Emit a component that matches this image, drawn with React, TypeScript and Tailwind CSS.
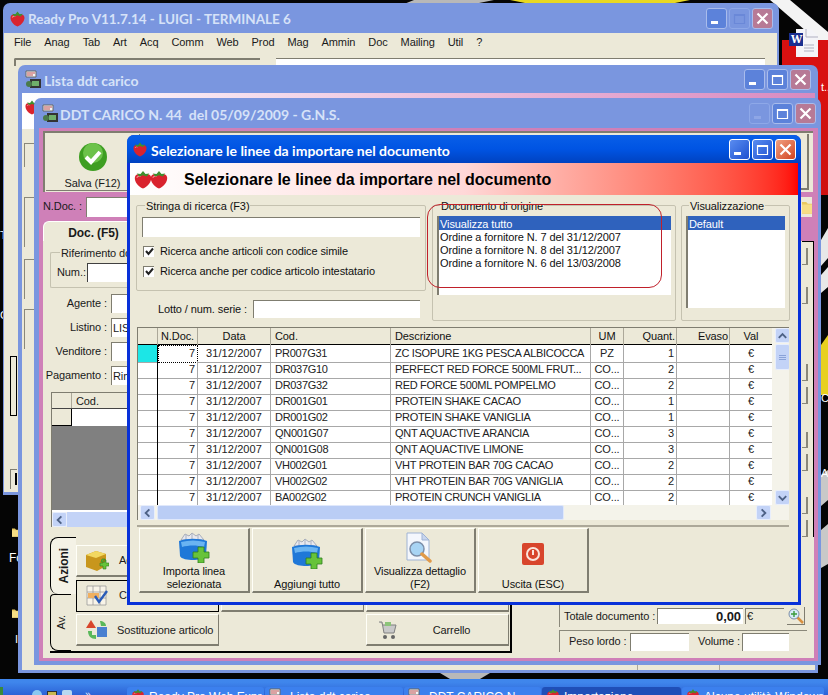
import React from "react";

const rows = [
  ["PR007G31", "ZC ISOPURE 1KG PESCA ALBICOCCA", "PZ", "1"],
  ["DR037G10", "PERFECT RED FORCE 500ML FRUT...", "CO...", "2"],
  ["DR037G32", "RED FORCE 500ML POMPELMO", "CO...", "2"],
  ["DR001G01", "PROTEIN SHAKE CACAO", "CO...", "1"],
  ["DR001G02", "PROTEIN SHAKE VANIGLIA", "CO...", "1"],
  ["QN001G07", "QNT AQUACTIVE ARANCIA", "CO...", "3"],
  ["QN001G08", "QNT AQUACTIVE LIMONE", "CO...", "3"],
  ["VH002G01", "VHT PROTEIN BAR 70G CACAO", "CO...", "2"],
  ["VH002G02", "VHT PROTEIN BAR 70G VANIGLIA", "CO...", "2"],
  ["BA002G02", "PROTEIN CRUNCH VANIGLIA", "CO...", "2"],
];

const menu = ["File", "Anag", "Tab", "Art", "Acq", "Comm", "Web", "Prod", "Mag", "Ammin", "Doc", "Mailing", "Util", "?"];

const Strawberry = ({ size = 16 }: { size?: number }) => (
  <svg width={size} height={size} viewBox="0 0 16 16" className="shrink-0">
    <path d="M8 15.5C4 14 1 10 1.5 6.5 2 4 5 3.5 8 4.5c3-1 6-.5 6.5 2C15 10 12 14 8 15.5z" fill="#d9232e" />
    <path d="M3 7c1-1.5 2-1.5 3-1" stroke="#f58a8a" strokeWidth="1" fill="none" />
    <path d="M3 3.5 6 4 8 1.5 10 4l3-.5L11 6 8 5 5 6z" fill="#3f8f2f" />
  </svg>
);

const WinBtn = ({ kind, state }: { kind: "min" | "max" | "close"; state: "active" | "inactive" | "disabled" }) => {
  const bg =
    kind === "close"
      ? state === "active"
        ? "bg-gradient-to-br from-[#f0a080] to-[#d0401c] border-white"
        : "bg-[#b77a96] border-[#a9bcec]"
      : state === "active"
        ? "bg-gradient-to-br from-[#5a8cf0] to-[#1f50d0] border-white"
        : state === "disabled"
          ? "bg-[#7a96df] border-[#8ea8e8]"
          : "bg-[#5c82da] border-[#a9bcec]";
  const stroke = state === "disabled" ? "#8ea6e6" : "#ffffff";
  return (
    <div className={`w-[21px] h-[21px] rounded-[3px] border flex items-center justify-center ${bg}`}>
      <svg width="15" height="15" viewBox="0 0 15 15">
        {kind === "min" && <rect x="2" y="10" width="7" height="3" fill={stroke} />}
        {kind === "max" && (
          <path d="M2.5 3.5h10v9h-10zM2.5 4.5h10" stroke={stroke === "#ffffff" ? "#ffffff" : "#6a88d8"} strokeWidth="1.2" fill="none" />
        )}
        {kind === "close" && <path d="M2.5 2.5l10 10M12.5 2.5l-10 10" stroke="#ffffff" strokeWidth="2.2" />}
      </svg>
    </div>
  );
};

const DocIcon = () => (
  <svg width="17" height="19" viewBox="0 0 17 19" className="shrink-0">
    <path d="M1 1h10v6H1z" fill="#f4f4f4" stroke="#666" />
    <path d="M2 3h8M2 5h6" stroke="#c05050" />
    <rect x="5" y="9" width="11" height="9" fill="#333" />
    <rect x="7" y="11" width="7" height="5" fill="#6fae6a" />
    <circle cx="4" cy="14" r="3" fill="#4a7a4a" />
  </svg>
);

const Basket = () => (
  <svg width="32" height="31" viewBox="0 0 32 31">
    <path d="M3 8l4-6 4 2 3-3 4 3 3-2 5 6z" fill="#e8e8ee" stroke="#8a93a8" strokeWidth="0.7" />
    <path d="M8 3v5M14 2v6M20 3v5" stroke="#a8b0c0" />
    <path d="M1 9c8-3 20-3 28 0l-1 15c-1 3-8 4-13 4S3 27 2 24z" fill="#1f78d8" />
    <path d="M3 10c8-2 16-2 24 0l-1 5c-7-2-15-2-22 0z" fill="#6ab4f2" />
    <path d="M20 15h6v5h5v6h-5v5h-6v-5h-5v-6h5z" fill="#67c33a" stroke="#2f7d20" strokeWidth="0.8" />
  </svg>
);

const DetailIcon = () => (
  <svg width="30" height="31" viewBox="0 0 30 31">
    <path d="M2 1h15l7 7v20H2z" fill="#f4f7fd" stroke="#9fb3d4" />
    <path d="M17 1v7h7z" fill="#c8d6ee" stroke="#9fb3d4" />
    <circle cx="12" cy="17" r="7" fill="#a8d4f4" stroke="#7c8ea8" strokeWidth="1.5" />
    <path d="M17 22l8 7" stroke="#e09a4a" strokeWidth="3.5" strokeLinecap="round" />
  </svg>
);

const PowerIcon = () => (
  <svg width="22" height="22" viewBox="0 0 22 22">
    <rect width="22" height="22" rx="2" fill="#d8452c" />
    <circle cx="11" cy="11" r="6" fill="none" stroke="#fbe4dc" strokeWidth="2" />
    <path d="M11 7v5" stroke="#fbe4dc" strokeWidth="2" />
  </svg>
);

const CheckCircle = () => (
  <svg width="28" height="28" viewBox="0 0 28 28">
    <circle cx="14" cy="14" r="14" fill="#3e9e22" />
    <circle cx="14" cy="10" r="10" fill="#6cc24a" />
    <path d="M7 14l5 5 9-10" stroke="#ffffff" strokeWidth="4" fill="none" />
  </svg>
);

const Folder = ({ w = 12, h = 16 }: { w?: number; h?: number }) => (
  <svg width={w} height={h} viewBox="0 0 12 16">
    <path d="M0 2h5l2 2h5v12H0z" fill="#e8c860" />
    <path d="M0 5h12v11H0z" fill="#f6dd85" />
  </svg>
);

const CubeIcon = () => (
  <svg width="24" height="23" viewBox="0 0 24 23">
    <path d="M1 6l10-4 10 3v12l-9 5-11-4z" fill="#c8961c" />
    <path d="M1 6l10-4 10 3-10 4z" fill="#f2d860" />
    <path d="M16 13h4v-3h-3zM15 14h3v-3h3v3h3v3h-3v3h-3v-3h-3z" fill="#67c33a" stroke="#2f7d20" strokeWidth="0.6" />
  </svg>
);

const GridIcon = () => (
  <svg width="22" height="21" viewBox="0 0 22 21">
    <path d="M1 1h19v19H1zM1 7h19M1 13h19M7 1v19M14 1v19" fill="#f8f4e8" stroke="#999" strokeWidth="0.8" />
    <rect x="2" y="8" width="11" height="5" fill="#f0b060" />
    <path d="M9 11l4 6 8-11" stroke="#2a5cb8" strokeWidth="2.4" fill="none" />
  </svg>
);

const ShapesIcon = () => (
  <svg width="23" height="22" viewBox="0 0 23 22">
    <path d="M5 1l5 8H0z" fill="#d8452c" />
    <path d="M11 8h10v10H11z" fill="#4a80d0" />
    <path d="M14 2c3 0 6 2 6 5h-5z" fill="#5ab85a" />
    <path d="M2 12c0 5 3 8 8 8v-4H6v-4z" fill="#5ab85a" />
  </svg>
);

const CartIcon = () => (
  <svg width="20" height="22" viewBox="0 0 20 22">
    <path d="M2 3h3l2 11h10l2-8H6" fill="#c9c9c9" stroke="#808080" />
    <path d="M8 3h6v4H8z" fill="#8cc47a" />
    <circle cx="8" cy="18" r="2" fill="#666" />
    <circle cx="16" cy="18" r="2" fill="#666" />
  </svg>
);

const Sunken = ({ className = "", children }: { className?: string; children?: React.ReactNode }) => (
  <div className={`bg-white border-t border-l border-[#7f7d70] leading-none flex items-center whitespace-nowrap overflow-hidden ${className}`}>{children}</div>
);

const ArrowBtn = ({ dir }: { dir: "up" | "down" | "left" | "right" }) => {
  const d = { up: "M3 9l4-4 4 4", down: "M3 5l4 4 4-4", left: "M9 3L5 7l4 4", right: "M5 3l4 4-4 4" }[dir];
  return (
    <div className="w-[15px] h-[15px] shrink-0 rounded-[2px] bg-[#c3d3f7] border border-[#e8eefc] flex items-center justify-center">
      <svg width="14" height="14" viewBox="0 0 14 14">
        <path d={d} stroke="#4d6185" strokeWidth="2" fill="none" />
      </svg>
    </div>
  );
};

const ActionBtn = ({ icon, lines }: { icon: React.ReactNode; lines: string[] }) => (
  <div className="w-[111px] h-[65px] flex flex-col items-center bg-[#ece9d8] border border-t-[#fffff8] border-l-[#fffff8] border-r-[#7f7d70] border-b-[#7f7d70] border-b-2 border-r-2">
    <div className="flex-1 flex items-center justify-center">{icon}</div>
    <div className="text-center leading-[13px]">
      {lines.map((l) => (
        <div key={l}>{l}</div>
      ))}
    </div>
  </div>
);

const ToolBtn = ({ icon, label, selected, labelClass = "" }: { icon?: React.ReactNode; label?: string; selected?: boolean; labelClass?: string }) => (
  <div className={`h-[32px] flex items-center bg-[#ece9d8] overflow-hidden ${selected ? "border border-black" : "border border-t-[#fffff8] border-l-[#fffff8] border-r-[#7f7d70] border-b-[#7f7d70] border-b-2"}`}>
    <div className="w-[40px] flex justify-center shrink-0">{icon}</div>
    <span className={`flex-1 text-center whitespace-nowrap ${labelClass}`}>{label}</span>
  </div>
);

const Legend = ({ children }: { children: React.ReactNode }) => (
  <legend className="ml-[3px] px-[1px] leading-[16px] h-[14px]">{children}</legend>
);

const Check = () => (
  <div className="w-[11px] h-[11px] bg-white border-t border-l border-[#7f7d70] flex items-center justify-center shrink-0">
    <svg width="9" height="9" viewBox="0 0 9 9">
      <path d="M1 4l2.5 3L8 1.5" stroke="#222" strokeWidth="2" fill="none" />
    </svg>
  </div>
);

const Stub = ({ mt }: { mt: string }) => (
  <div className={`h-[18px] w-[6px] border-r-2 border-b border-[#8a887a] ${mt}`} />
);

function ReadyProWindow() {
  return (
    <div className="absolute left-[3px] top-[3px] w-[776px] h-[492px] flex flex-col rounded-t-[7px] bg-[#7a96df] text-[#1a1a1a]">
      <div className="h-[30px] flex items-center pl-[6px] pr-[6px] shrink-0">
        <Strawberry size={17} />
        <span className="ml-[2px] mt-[2px] font-['Lato',sans-serif] font-bold text-[13.5px] tracking-normal text-[#d6e2f8] whitespace-nowrap">Ready Pro V11.7.14 - LUIGI - TERMINALE 6</span>
        <div className="ml-auto flex gap-[2px]">
          <WinBtn kind="min" state="inactive" />
          <WinBtn kind="max" state="disabled" />
          <WinBtn kind="close" state="inactive" />
        </div>
      </div>
      <div className="flex-1 ml-[1px] mr-[2px] bg-[#ece9d8] flex flex-col">
        <div className="h-[19px] flex items-center pl-[10px] gap-[13px] shrink-0">
          {menu.map((m) => (
            <span key={m}>{m}</span>
          ))}
        </div>
        <div className="flex gap-[16px] pl-[10px] pr-[12px] pt-[6px] h-[14px] shrink-0">
          <div className="w-[246px] h-[8px] border-t-2 border-l-2 border-[#7f7d70] rounded-tl-[2px] bg-[#ece9d8]" />
          <div className="flex-1 h-[8px] border-t border-[#7f7d70] bg-white" />
        </div>
        <div className="flex flex-col gap-[3px] pl-[6px] pr-[760px] pt-[290px]">
          <div className="h-[60px] border border-black bg-[#ece9d8]" />
          <div className="h-[20px] mt-[50px] border-t border-l border-[#7f7d70] bg-[#ece9d8] flex justify-end">
            <div className="w-[2px] h-[12px] mt-[3px] bg-black" />
          </div>
        </div>
      </div>
      <div className="h-[3px] shrink-0" />
    </div>
  );
}

function ListaWindow() {
  return (
    <div className="absolute left-[18px] top-[65px] w-[800px] h-[608px] flex flex-col rounded-t-[7px] bg-[#7a96df] text-[#1a1a1a]">
      <div className="h-[28px] flex items-center pl-[7px] pr-[7px] shrink-0">
        <DocIcon />
        <span className="ml-[2px] mt-[2px] font-['Lato',sans-serif] font-bold text-[14px] tracking-normal text-[#d6e2f8] whitespace-nowrap">Lista ddt carico</span>
        <div className="ml-auto flex gap-[2px]">
          <WinBtn kind="min" state="inactive" />
          <WinBtn kind="max" state="inactive" />
          <WinBtn kind="close" state="inactive" />
        </div>
      </div>
      <div className="flex-1 ml-[4px] mr-[3px] mb-[3px] bg-[#ece9d8] flex flex-col">
        <div className="h-[36px] shrink-0 bg-gradient-to-r from-white to-[#d88ac0] pl-[2px] pt-[6px]">
          <Strawberry size={16} />
        </div>
        <div className="w-[12px] flex-1 flex flex-col pl-[2px] pt-[14px]">
          <div className="h-[24px] border-t border-l border-[#8a887a]" />
          <div className="h-[50px] mt-[30px] border-t border-l border-[#8a887a]" />
          <div className="h-[40px] mt-[12px] border-t border-l border-[#8a887a]" />
          <div className="h-[40px] mt-[10px] border-t border-l border-[#8a887a]" />
        </div>
        <div className="h-[6px] shrink-0 flex">
          <div className="w-[615px]" />
          <div className="w-[82px] border-l border-[#aca899]" />
          <div className="flex-1 border-l border-[#aca899]" />
        </div>
      </div>
    </div>
  );
}

function DdtWindow() {
  return (
    <div className="absolute left-[34px] top-[98px] w-[787px] h-[567px] flex flex-col rounded-t-[7px] bg-[#7a96df] text-[#1a1a1a]">
      <div className="h-[30px] flex items-center pl-[8px] pr-[5px] shrink-0">
        <DocIcon />
        <span className="ml-[1px] mt-[2px] font-['Lato',sans-serif] font-bold text-[14px] tracking-normal text-[#d6e2f8] whitespace-pre">DDT CARICO N. 44  del 05/09/2009 - G.N.S.</span>
        <div className="ml-auto flex gap-[2px]">
          <WinBtn kind="min" state="disabled" />
          <WinBtn kind="max" state="inactive" />
          <WinBtn kind="close" state="inactive" />
        </div>
      </div>
      <div className="flex-1 ml-[5px] mr-[3px] mb-[4px] pl-[4px] pr-[4px] pb-[3px] bg-[#cf80b8] flex flex-col">
        <div className="mt-[3px] h-[61px] bg-[#ece9d8] border-t-2 border-l-2 border-[#7f7d70] mr-[1px] flex shrink-0 p-[1px]">
          <div className="w-[94px] flex flex-col items-center border-r border-b border-[#7f7d70]">
            <div className="flex-1 flex items-center pt-[3px]">
              <CheckCircle />
            </div>
            <span className="leading-[14px]">Salva (F12)</span>
          </div>
          <div className="flex-1 border-r-2 border-b-2 border-[#7f7d70] mr-[3px] mb-[1px]" />
        </div>
        <div className="h-[29px] flex items-center shrink-0">
          <span className="whitespace-nowrap">N.Doc. :</span>
          <Sunken className="ml-[4px] w-[200px] h-[20px]" />
          <div className="ml-auto mr-[2px] w-[11px] h-[20px] bg-[#ece9d8] flex items-center justify-center">
            <Folder w={10} h={14} />
          </div>
        </div>
        <div className="h-[20px] shrink-0">
          <div className="w-[100px] h-[20px] bg-[#ece9d8] rounded-tl-[6px] border-t border-l border-white font-bold text-[12px] text-center leading-[22px]">Doc. (F5)</div>
        </div>
        <div className="flex-1 flex flex-col bg-[#ece9d8]">
          <div className="h-[296px] flex shrink-0">
            <div className="w-[500px] flex flex-col">
              <fieldset className="ml-[7px] mt-[4px] h-[43px] w-[78px] border-l border-t border-b border-[#c5c2b0] rounded-l-[2px] pl-[6px]">
                <Legend>Riferimento do</Legend>
                <div className="flex items-center mt-[4px]">
                  <span className="w-[25px]">Num.:</span>
                  <Sunken className="ml-[5px] w-[120px] h-[19px] border-[#404040]" />
                </div>
              </fieldset>
              {[
                ["Agente :", ""],
                ["Listino :", "LISTINO"],
                ["Venditore :", ""],
                ["Pagamento :", "Rimessa"],
              ].map(([label, value], i) => (
                <div key={label} className={`flex items-center h-[19px] mb-[5px] ${i === 0 ? "mt-[6px]" : ""}`}>
                  <div className="w-[64px] flex justify-end whitespace-nowrap">{label}</div>
                  <Sunken className="ml-[4px] w-[120px] h-[19px] pl-[1px]">{value}</Sunken>
                </div>
              ))}
              <div className="ml-[8px] mt-[2px] w-[440px] flex flex-col border-t border-l border-[#7f7d70]">
                <div className="h-[16px] flex shrink-0 border-b border-[#444]">
                  <div className="w-[20px] border-r border-[#aca899]" />
                  <div className="pl-[4px]">Cod.</div>
                </div>
                <div className="h-[17px] flex bg-white shrink-0">
                  <div className="w-[20px] bg-[#ece9d8] border-r border-b border-black" />
                </div>
                <div className="h-[84px] bg-[#808080]" />
                <div className="h-[2px] bg-white" />
                <div className="h-[15px] flex bg-[#f4f3ea]">
                  <ArrowBtn dir="left" />
                  <div className="w-[300px] bg-[#c3d3f7]" />
                </div>
              </div>
            </div>
            <div className="ml-auto w-[12px] border-r border-black border-t flex flex-col">
              <Stub mt="mt-[6px]" />
              <Stub mt="mt-[22px]" />
              <Stub mt="mt-[60px]" />
              <Stub mt="mt-[6px]" />
              <Stub mt="mt-[28px]" />
              <Stub mt="mt-[6px]" />
              <Stub mt="mt-[26px]" />
              <Stub mt="mt-[6px]" />
            </div>
          </div>
          <div className="flex-1 flex">
            <div className="ml-[7px] w-[462px] h-[116px] flex border-r-2 border-b-2 border-black">
              <div className="w-[26px] shrink-0 flex flex-col">
                <div className="h-[57px] bg-[#f4f2e6] border-l border-t border-black rounded-tl-[8px] rounded-bl-[8px] flex items-center justify-center font-bold text-[12px]">
                  <span className="[writing-mode:vertical-rl] rotate-180">Azioni</span>
                </div>
                <div className="h-[57px] w-[21px] border-l border-t border-b border-black rounded-tl-[4px] rounded-bl-[8px] flex items-center justify-center">
                  <span className="[writing-mode:vertical-rl] rotate-180">Av.</span>
                </div>
              </div>
              <div className="w-[433px] grid grid-cols-3 gap-[2px] pt-[8px] h-[110px]">
                <ToolBtn icon={<CubeIcon />} label="Aggiungi" labelClass="text-left pl-[2px]" />
                <ToolBtn />
                <ToolBtn />
                <ToolBtn icon={<GridIcon />} label="Controllo" selected labelClass="text-left pl-[2px]" />
                <ToolBtn />
                <ToolBtn />
                <ToolBtn icon={<ShapesIcon />} label="Sostituzione articolo" labelClass="pr-[6px]" />
                <div />
                <ToolBtn icon={<CartIcon />} label="Carrello" labelClass="pr-[12px]" />
              </div>
            </div>
            <div className="flex-1 flex flex-col justify-end pl-[47px] pb-[6px]">
              <div className="h-[22px] flex items-center border-l border-[#8a887a] pl-[4px] mr-[4px]">
                <span className="w-[91px] whitespace-nowrap">Totale documento :</span>
                <Sunken className="ml-[2px] w-[86px] h-[16px] justify-end pr-[2px] font-bold text-[13px]">0,00</Sunken>
                <div className="ml-[2px] w-[39px] h-[16px] border-t border-l border-[#7f7d70] leading-[15px] pl-[1px]">€</div>
                <div className="ml-[3px] w-[18px] h-[18px] bg-[#ece9d8] border-r border-b border-[#7f7d70] flex items-center justify-center">
                  <svg width="16" height="16" viewBox="0 0 16 16">
                    <path d="M9 9l6 6" stroke="#d89040" strokeWidth="2.5" />
                    <circle cx="6" cy="6" r="5" fill="#d8ecf8" stroke="#7c8ea8" />
                    <path d="M3 6h6M6 3v6" stroke="#3a9a3a" strokeWidth="1.4" />
                  </svg>
                </div>
              </div>
              <div className="h-[22px] mt-[3px] w-[248px] flex items-center border-t border-l border-[#8a887a] pl-[9px]">
                <span className="w-[56px] whitespace-nowrap">Peso lordo :</span>
                <Sunken className="ml-[5px] w-[59px] h-[18px]" />
                <span className="w-[41px] ml-[9px] whitespace-nowrap">Volume :</span>
                <Sunken className="ml-[3px] w-[47px] h-[18px]" />
              </div>
            </div>
          </div>
        </div>
      </div>
    </div>
  );
}

function ImportDialog() {
  return (
    <div className="absolute left-[127px] top-[135px] w-[674px] h-[470px] flex flex-col rounded-t-[7px] bg-[#0831d9] text-[#111]">
      <div className="h-[28px] flex items-center pl-[5px] pr-[5px] shrink-0 rounded-t-[7px] bg-gradient-to-b from-[#0a5fe8] via-[#0054e3] to-[#0042c0]">
        <Strawberry size={16} />
        <span className="ml-[3px] mt-[2px] font-['Lato',sans-serif] font-bold text-[14px] tracking-normal text-white whitespace-nowrap">Selezionare le linee da importare nel documento</span>
        <div className="ml-auto flex gap-[2px]">
          <WinBtn kind="min" state="active" />
          <WinBtn kind="max" state="active" />
          <WinBtn kind="close" state="active" />
        </div>
      </div>
      <div className="relative flex-1 mx-[3px] mb-[3px] bg-[#ece9d8] flex flex-col">
        <div className="h-[32px] shrink-0 flex items-center pl-[3px] bg-gradient-to-r from-white via-[#ffd8d8] via-50% to-[#ff0000]">
          <div className="flex w-[36px] -space-x-[4px]">
            <Strawberry size={20} />
            <Strawberry size={20} />
          </div>
          <span className="ml-[15px] mt-[2px] text-[16px] tracking-normal font-bold text-black whitespace-nowrap">Selezionare le linee da importare nel documento</span>
        </div>
        <div className="h-[132px] flex shrink-0 pl-[6px] pt-[3px]">
          <div className="w-[290px] flex flex-col">
            <fieldset className="h-[93px] border border-[#c5c2b0] rounded-[2px] px-[5px] pt-[5px]">
              <Legend>Stringa di ricerca (F3)</Legend>
              <Sunken className="w-[278px] h-[20px]" />
              <div className="flex items-center gap-[6px] h-[12px] mt-[8px] ml-[1px]">
                <Check />
                <span className="whitespace-nowrap">Ricerca anche articoli con codice simile</span>
              </div>
              <div className="flex items-center gap-[6px] h-[12px] mt-[8px] ml-[1px]">
                <Check />
                <span className="whitespace-nowrap">Ricerca anche per codice articolo intestatario</span>
              </div>
            </fieldset>
            <div className="flex items-center justify-end pr-[6px] mt-[9px]">
              <span className="whitespace-nowrap">Lotto / num. serie :</span>
              <Sunken className="ml-[6px] w-[167px] h-[18px]" />
            </div>
          </div>
          <fieldset className="ml-[6px] w-[244px] h-[123px] border border-[#c5c2b0] rounded-[2px] px-[4px] pt-[4px]">
            <Legend>Documento di origine</Legend>
            <div className="h-[79px] bg-white border-l-2 border-[#7f7d70]">
              <div className="bg-[#2f62bd] text-white h-[14px] leading-[16px] pl-[1px]">Visualizza tutto</div>
              <div className="h-[13px] leading-[15px] pl-[1px]">Ordine a fornitore N. 7 del 31/12/2007</div>
              <div className="h-[13px] leading-[15px] pl-[1px]">Ordine a fornitore N. 8 del 31/12/2007</div>
              <div className="h-[13px] leading-[15px] pl-[1px]">Ordine a fornitore N. 6 del 13/03/2008</div>
            </div>
          </fieldset>
          <fieldset className="ml-[5px] w-[109px] h-[123px] border border-[#c5c2b0] rounded-[2px] px-[4px] pt-[4px]">
            <Legend>Visualizzazione</Legend>
            <div className="h-[92px] bg-white border-l-2 border-[#7f7d70]">
              <div className="bg-[#2f62bd] text-white h-[14px] leading-[16px] pl-[1px]">Default</div>
            </div>
          </fieldset>
        </div>
        <div className="ml-[7px] w-[652px] h-[193px] flex flex-col shrink-0 border-t border-l border-[#7f7d70]">
          <div className="flex h-[177px] overflow-hidden">
            <div className="w-[634px] shrink-0 flex flex-col bg-white overflow-hidden">
              <div className="h-[17px] shrink-0 bg-[#ece9d8] grid grid-cols-[20px_40px_73px_120px_200px_33px_53px_53px_42px] border-b border-black leading-[17px]">
                <div className="border-r border-[#aca899]" />
                <div className="border-r border-[#aca899] pl-[3px]">N.Doc.</div>
                <div className="border-r border-[#aca899] text-center">Data</div>
                <div className="border-r border-[#aca899] pl-[4px]">Cod.</div>
                <div className="border-r border-[#aca899] pl-[4px]">Descrizione</div>
                <div className="border-r border-[#aca899] text-center">UM</div>
                <div className="border-r border-[#aca899] text-right pr-[1px]">Quant.</div>
                <div className="border-r border-[#aca899] text-right pr-[1px]">Evaso</div>
                <div className="text-center">Val</div>
              </div>
              {rows.map((r, i) => (
                <div key={r[0]} className="h-[16px] shrink-0 grid grid-cols-[20px_40px_73px_120px_200px_33px_53px_53px_42px] leading-[17px] text-[#222] whitespace-nowrap">
                  <div className={`border-r border-black border-b-[#a8a8a8] border-b ${i === 0 ? "bg-[#1ce6e6]" : ""}`} />
                  <div className={`text-right pr-[2px] ${i === 0 ? "border border-dotted border-black leading-[15px]" : "border-r border-b border-[#a8a8a8]"}`}>7</div>
                  <div className="border-r border-b border-[#a8a8a8] text-center tracking-[0.1px]">31/12/2007</div>
                  <div className="border-r border-b border-[#a8a8a8] pl-[4px] tracking-[-0.3px]">{r[0]}</div>
                  <div className="border-r border-b border-[#a8a8a8] pl-[4px] overflow-hidden tracking-[-0.3px]">{r[1]}</div>
                  <div className="border-r border-b border-[#a8a8a8] text-center">{r[2]}</div>
                  <div className="border-r border-b border-[#a8a8a8] text-right pr-[2px]">{r[3]}</div>
                  <div className="border-r border-b border-[#a8a8a8]" />
                  <div className="border-b border-[#a8a8a8] text-center">€</div>
                </div>
              ))}
            </div>
            <div className="flex-1 bg-[#f4f3ea] flex flex-col items-center pl-[3px]">
              <ArrowBtn dir="up" />
              <div className="w-[15px] h-[26px] mt-[1px] bg-[#c3d3f7] border border-[#e8eefc] rounded-[2px] flex flex-col items-center justify-center gap-[1px]">
                <div className="w-[7px] h-[1px] bg-[#8aa2d8]" />
                <div className="w-[7px] h-[1px] bg-[#8aa2d8]" />
                <div className="w-[7px] h-[1px] bg-[#8aa2d8]" />
              </div>
              <div className="flex-1" />
              <ArrowBtn dir="down" />
            </div>
          </div>
          <div className="h-[15px] flex items-center bg-[#f4f3ea] pl-[2px]">
            <ArrowBtn dir="left" />
            <div className="w-[407px] h-[15px] ml-[2px] bg-[#bacdf5] border border-[#e0e8fb] rounded-[2px]" />
            <div className="w-[192px]" />
            <ArrowBtn dir="right" />
          </div>
        </div>
        <div className="ml-[7px] w-[652px] mt-[5px] border-t-2 border-[#aca899] pt-[1px] pl-[2px] flex gap-[2px]">
          <ActionBtn icon={<Basket />} lines={["Importa linea", "selezionata"]} />
          <ActionBtn icon={<Basket />} lines={["Aggiungi tutto"]} />
          <ActionBtn icon={<DetailIcon />} lines={["Visualizza dettaglio", "(F2)"]} />
          <ActionBtn icon={<PowerIcon />} lines={["Uscita (ESC)"]} />
        </div>
        <div className="absolute left-[297px] top-[41px] w-[235px] h-[84px] border border-[#c0202a] rounded-[13px]" />
      </div>
    </div>
  );
}

function Wallpaper() {
  return (
    <svg className="absolute left-0 top-0" width="828" height="695" viewBox="0 0 828 695">
      <rect width="828" height="695" fill="#050505" />
      <path d="M414 0h80l-20 4h-70z" fill="#b8b8b8" />
      <path d="M510 0h180l-20 4H530z" fill="#e8d820" />
      <path d="M770 0h20l38 32v18z" fill="#f4f4f4" />
      <rect x="782" y="40" width="46" height="70" fill="#d81010" />
      <rect x="821" y="110" width="7" height="85" fill="#d01010" />
      <path d="M821 240l7-12v30l-7 8zM821 275l7-8v20l-7 6z" fill="#e8e8e8" />
      <path d="M821 345l7-10v60h-7z" fill="#e8d020" />
      <path d="M821 475l7-5v30l-7 6zM821 530l7-6v40l-7 4z" fill="#c8c8c8" />
      <path d="M440 673h50l-10 6h-30z" fill="#b8b8b8" />
      <path d="M796 29h15l7 7v21h-22z" fill="#f4f4f8" />
      <path d="M806 29v8h12M804 45h10M804 48h10M804 51h10" stroke="#b0b0c0" strokeWidth="1" fill="none" />
      <rect x="789" y="33" width="14" height="13" fill="#1a2f90" />
    </svg>
  );
}

function Taskbar() {
  const items = [
    { w: "w-[137px]", t: "Ready Pro Web Expr...", ic: <Strawberry size={14} /> },
    { w: "w-[138px]", t: "Lista ddt carico", ic: <DocIcon /> },
    { w: "w-[137px]", t: "DDT CARICO N...", ic: <DocIcon /> },
    { w: "w-[139px]", t: "Importazione...", ic: <Strawberry size={14} />, active: true },
    { w: "w-[142px]", t: "Alcune utilità Windows", ic: <Strawberry size={14} /> },
  ];
  return (
    <div className="absolute left-0 top-[679px] w-[828px] h-[16px] overflow-hidden bg-gradient-to-b from-[#3f86ec] from-20% to-[#2d62d6] flex items-start pt-[8px] text-white">
      <div className="w-[127px] shrink-0 flex items-center gap-[5px] pl-[29px] h-[16px] border-l-[3px] border-[#3a8a3a]">
        <div className="w-[10px] h-[10px] rounded-full bg-[#8ac8f0]" />
        <div className="w-[10px] h-[9px] bg-[#c8b850] border border-[#303030]" />
        <div className="w-[10px] h-[10px] bg-[#b8d8f0] rounded-[2px]" />
        <span className="ml-[8px] text-[10px] leading-none">»</span>
      </div>
      <div className="flex gap-[1px]">
        {items.map((it) => (
          <div key={it.t} className={`${it.w} h-[16px] rounded-t-[3px] flex items-start pl-[4px] pt-[1px] gap-[4px] whitespace-nowrap overflow-hidden text-[12px] tracking-normal ${it.active ? "bg-[#1f4fb8]" : "bg-[#3c80ee]"}`}>
            {it.ic}
            <span>{it.t}</span>
          </div>
        ))}
      </div>
    </div>
  );
}

export default function App() {
  return (
    <div className="relative w-[828px] h-[695px] overflow-hidden bg-black font-['Liberation_Sans',sans-serif] text-[11px] tracking-[-0.1px]">
      <Wallpaper />
      <span className="absolute left-[791px] top-[33px] font-serif font-bold text-white text-[12px] leading-none">W</span>
      <span className="absolute left-[0px] top-[227px] text-white">T</span>
      <span className="absolute left-[0px] top-[307px] text-white">C</span>
      <div className="absolute left-[12px] top-[518px]"><Folder w={7} h={28} /></div>
      <span className="absolute left-[9px] top-[549px] text-white text-[12px]">Fo</span>
      <div className="absolute left-[12px] top-[601px]"><Folder w={7} h={24} /></div>
      <span className="absolute left-[15px] top-[631px] text-white">I</span>
      <span className="absolute left-[821px] top-[79px] text-white">t..</span>
      <span className="absolute left-[821px] top-[390px] text-white">C</span>
      <span className="absolute left-[821px] top-[465px] text-white">A</span>
      <ReadyProWindow />
      <ListaWindow />
      <DdtWindow />
      <ImportDialog />
      <Taskbar />
    </div>
  );
}
